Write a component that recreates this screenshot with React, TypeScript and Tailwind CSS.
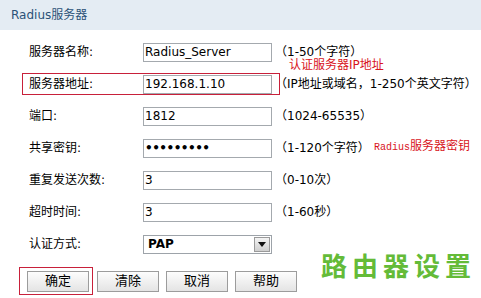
const font = { fontFamily: '"DejaVu Sans", "Noto Sans CJK SC", sans-serif' };
const noteFont = { fontFamily: '"Liberation Mono", "Noto Sans CJK SC", monospace' };

type Row = {
  label: string;
  value: string;
  hint: string;
  kind?: 'text' | 'password' | 'select';
  boxed?: boolean;
};

const rows: Row[] = [
  { label: '服务器名称:', value: 'Radius_Server', hint: '（1-50个字符）' },
  { label: '服务器地址:', value: '192.168.1.10', hint: '（IP地址或域名，1-250个英文字符）', boxed: true },
  { label: '端口:', value: '1812', hint: '（1024-65535）' },
  { label: '共享密钥:', value: '•••••••••', hint: '（1-120个字符）', kind: 'password' },
  { label: '重复发送次数:', value: '3', hint: '（0-10次）' },
  { label: '超时时间:', value: '3', hint: '（1-60秒）' },
  { label: '认证方式:', value: 'PAP', hint: '', kind: 'select' }
];

function Field({ row }: { row: Row }) {
  if (row.kind === 'select') {
    return (
      <div className="flex items-center w-[129px] h-[19px] border border-[#9da3a9] bg-white">
        <span className="flex-1 pl-[4px] text-[12px] font-bold text-black leading-none">{row.value}</span>
        <span className="flex items-center justify-center w-[16px] h-[15px] mr-[1px] bg-gradient-to-b from-[#f4f4f4] to-[#cfcfcf] border border-[#9a9a9a]">
          <svg width="8" height="5" viewBox="0 0 8 5">
            <path d="M0 0h8L4 5z" fill="#111" />
          </svg>
        </span>
      </div>
    );
  }
  return (
    <div className="flex items-center w-[129px] h-[19px] border border-[#a4a9ae] bg-white pl-[1px]">
      <span
        className={
          row.kind === 'password'
            ? 'text-[12px] font-bold tracking-[-0.5px] text-black leading-none'
            : 'text-[12px] text-black leading-none'
        }>
        {row.value}
      </span>
    </div>
  );
}

function Button({ text }: { text: string }) {
  return (
    <div className="flex items-center justify-center w-[62px] h-[21px] border border-[#9c9c9c] bg-gradient-to-b from-[#fdfdfd] to-[#e4e4e4] text-[13px] text-black">
      {text}
    </div>
  );
}

export default function App() {
  return (
    <div className="relative w-[481px] h-[298px] bg-white overflow-hidden text-black" style={font}>
      <div className="h-[30px] bg-[#e4ecf3] flex items-center pl-[11px]">
        <span className="text-[12px] text-[#2b5277]">Radius服务器</span>
      </div>

      <div className="pt-[6px]">
        {rows.map((row, i) => (
          <div key={row.label} className="relative flex items-center h-[32px] pl-[22px]">
            <div
              className={
                row.boxed
                  ? 'flex items-center w-[258px] h-[22px] border border-[#c8203a]'
                  : 'flex items-center w-[258px] h-[22px] border border-transparent'
              }>
              <span className="w-[120px] pl-[6px] text-[12px]">{row.label}</span>
              <Field row={row} />
            </div>
            {row.hint && <span className="ml-[-5px] text-[12px] whitespace-nowrap">{row.hint}</span>}
            {i === 0 && (
              <span className="absolute left-[289px] top-[23px] text-[12px] leading-none text-[#d8141c] whitespace-nowrap">
                认证服务器IP地址
              </span>
            )}
            {i === 3 && (
              <span
                className="absolute left-[374px] top-[9px] text-[12px] leading-none text-[#d8141c] whitespace-nowrap"
                style={noteFont}>
                <span className="text-[10px]">Radius</span>服务器密钥
              </span>
            )}
          </div>
        ))}
      </div>

      <div className="flex items-center mt-[7px] pl-[19px]">
        <div className="flex items-center h-[28px] border border-[#c8203a] pl-[7px] pr-[3px]">
          <Button text="确定" />
        </div>
        <div className="flex gap-[7px] ml-[4px]">
          <Button text="清除" />
          <Button text="取消" />
          <Button text="帮助" />
        </div>
      </div>

      <div className="absolute left-[321px] top-[254px] text-[26px] font-bold tracking-[5px] leading-none text-[#64bb38]">
        路由器设置
      </div>
    </div>
  );
}
